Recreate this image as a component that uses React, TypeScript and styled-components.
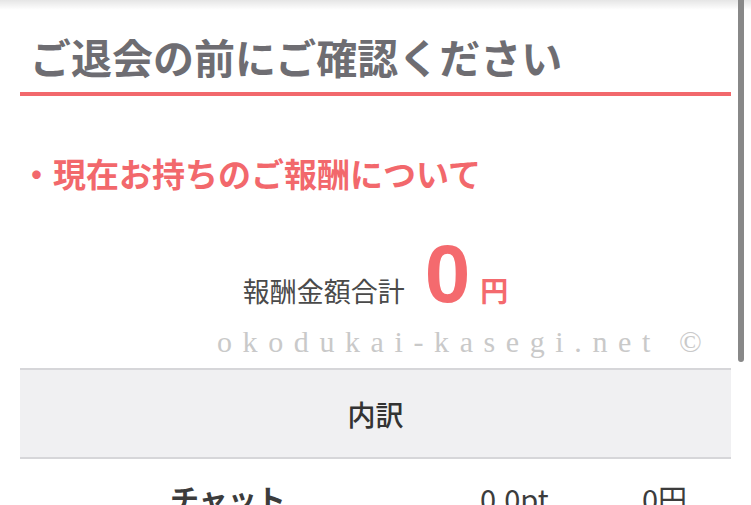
import * as React from "react";
import styled, { createGlobalStyle } from "styled-components";

const GlobalStyle = createGlobalStyle`
    html, body {
        margin: 0;
        padding: 0;
        background: #ffffff;
    }
    body {
        font-family: "Noto Sans CJK JP", "Noto Sans", sans-serif;
    }
`

const Page = styled.div`
    position: relative;
    width: 751px;
    height: 505px;
    overflow: hidden;
    background: #fff;
`

const HeaderShadow = styled.div`
    height: 10px;
    background: linear-gradient(to bottom, rgba(0, 0, 0, 0.1), rgba(0, 0, 0, 0));
`

const Content = styled.div`
    padding: 0 20px;
`

const Title = styled.h1`
    margin: 22px 0 0;
    padding: 0 0 12px 10px;
    font-size: 41px;
    line-height: 48px;
    font-weight: 700;
    color: #6e6d72;
    border-bottom: 4px solid #f2686c;
`

const Section = styled.h2`
    margin: 57px 0 0;
    font-size: 33px;
    line-height: 40px;
    font-weight: 700;
    color: #f2686c;
`

const Total = styled.div`
    display: flex;
    justify-content: center;
    align-items: baseline;
    margin: 40px 0 0;
    height: 135px;
`

const TotalLabel = styled.span`
    font-size: 27px;
    font-weight: 400;
    color: #4a4a4a;
    margin-right: 20px;
`

const Amount = styled.span`
    font-family: "Liberation Sans", Arial, sans-serif;
    font-size: 82px;
    line-height: 1;
    font-weight: 700;
    color: #f46a6e;
    margin-right: 10px;
`

const Yen = styled.span`
    font-size: 28px;
    font-weight: 700;
    color: #f46a6e;
`

const Watermark = styled.div`
    position: absolute;
    left: 217px;
    top: 325px;
    font-family: "Liberation Serif", "Times New Roman", serif;
    font-size: 30px;
    letter-spacing: 10.6px;
    color: #c9c9c9;
    white-space: nowrap;
    pointer-events: none;
`

const BreakdownHead = styled.div`
    height: 87px;
    display: flex;
    align-items: center;
    justify-content: center;
    background: #f0f0f2;
    border-top: 2px solid #d6d6d9;
    border-bottom: 2px solid #d6d6d9;
    font-size: 28px;
    font-weight: 500;
    color: #333333;
`

const Row = styled.div`
    display: grid;
    grid-template-columns: 150px 310px 162px auto;
    align-items: center;
    padding-top: 19px;
    font-size: 29px;
    line-height: 40px;
    color: #3c3c3c;
`

interface ICell {
    bold?: boolean;
}

const Cell = styled.span<ICell>`
    font-weight: ${props => props.bold ? 700 : 400};
`

const Scrollbar = styled.div`
    position: absolute;
    top: 0;
    right: 7px;
    width: 6px;
    height: 362px;
    background: #888888;
    border-radius: 0 0 3px 3px;
`

interface Item {
    name: string;
    point: string;
    yen: string;
}

const items: Item[] = [
    { name: "チャット", point: "0.0pt", yen: "0円" },
]

function App() {
    return (
        <Page>
            <GlobalStyle />
            <HeaderShadow />
            <Content>
                <Title>ご退会の前にご確認ください</Title>
                <Section>・現在お持ちのご報酬について</Section>
                <Total>
                    <TotalLabel>報酬金額合計</TotalLabel>
                    <Amount>0</Amount>
                    <Yen>円</Yen>
                </Total>
                <BreakdownHead>内訳</BreakdownHead>
                {items.map((item, index) => (
                    <Row key={index}>
                        <span />
                        <Cell bold>{item.name}</Cell>
                        <Cell>{item.point}</Cell>
                        <Cell>{item.yen}</Cell>
                    </Row>
                ))}
            </Content>
            <Watermark>okodukai-kasegi.net ©</Watermark>
            <Scrollbar />
        </Page>
    )
}

export default App;
